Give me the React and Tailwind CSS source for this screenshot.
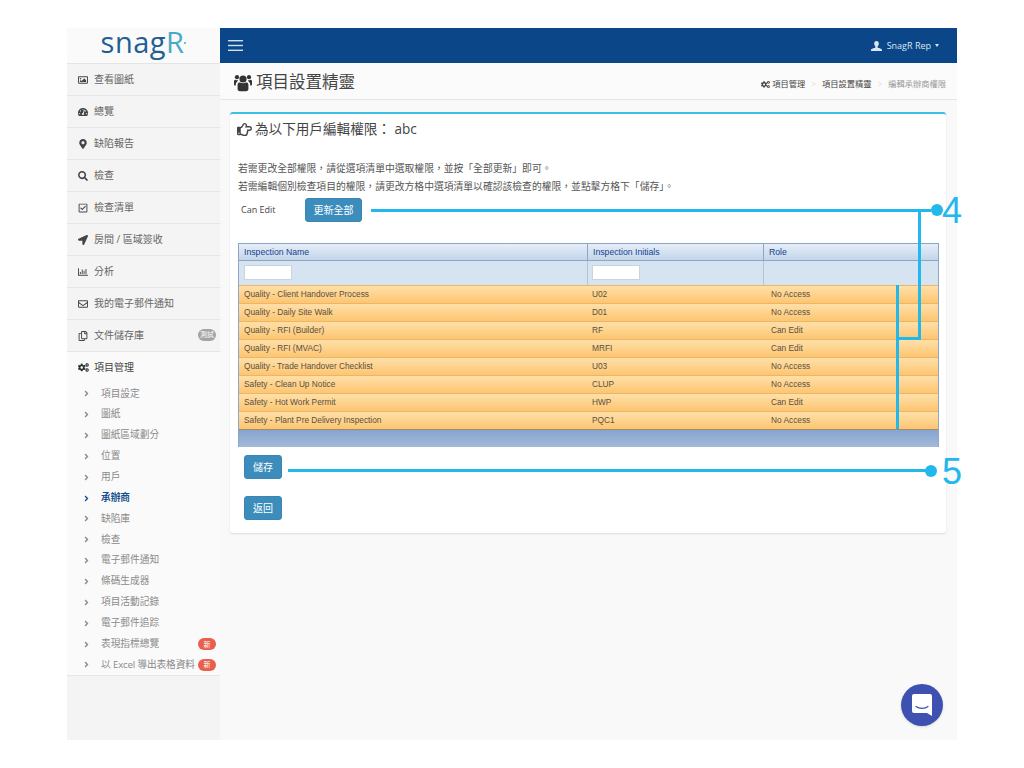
import {
  FaRegImage, FaTachometerAlt, FaMapMarkerAlt, FaSearch, FaRegCheckSquare, FaLocationArrow,
  FaRegChartBar, FaRegEnvelope, FaRegCopy, FaCogs, FaRegHandPointRight, FaAngleRight,
} from "react-icons/fa";

const CJK = "font-['Open_Sans','Noto_Sans_CJK_TC',sans-serif]";

const topMenu = [
  { icon: FaRegImage, label: "查看圖紙" },
  { icon: FaTachometerAlt, label: "總覽" },
  { icon: FaMapMarkerAlt, label: "缺陷報告" },
  { icon: FaSearch, label: "檢查" },
  { icon: FaRegCheckSquare, label: "檢查清單" },
  { icon: FaLocationArrow, label: "房間 / 區域簽收" },
  { icon: FaRegChartBar, label: "分析" },
  { icon: FaRegEnvelope, label: "我的電子郵件通知" },
  { icon: FaRegCopy, label: "文件儲存庫", badge: "測試" },
];

const subMenu = [
  { label: "項目設定" },
  { label: "圖紙" },
  { label: "圖紙區域劃分" },
  { label: "位置" },
  { label: "用戶" },
  { label: "承辦商", active: true },
  { label: "缺陷庫" },
  { label: "檢查" },
  { label: "電子郵件通知" },
  { label: "條碼生成器" },
  { label: "項目活動記錄" },
  { label: "電子郵件追踪" },
  { label: "表現指標總覽", isNew: true },
  { label: "以 Excel 導出表格資料", isNew: true, tight: true },
];

const rows = [
  ["Quality - Client Handover Process", "U02", "No Access"],
  ["Quality - Daily Site Walk", "D01", "No Access"],
  ["Quality - RFI (Builder)", "RF", "Can Edit"],
  ["Quality - RFI (MVAC)", "MRFI", "Can Edit"],
  ["Quality - Trade Handover Checklist", "U03", "No Access"],
  ["Safety - Clean Up Notice", "CLUP", "No Access"],
  ["Safety - Hot Work Permit", "HWP", "Can Edit"],
  ["Safety - Plant Pre Delivery Inspection", "PQC1", "No Access"],
];

function Sidebar() {
  return (
    <div className="w-[153px] shrink-0 bg-[#f4f4f4] flex flex-col">
      <div className="h-[36px] bg-[#fafafa] border-b border-[#e4e4e4] flex items-center justify-center">
        <span className="font-['Open_Sans',sans-serif] font-medium text-[29px] leading-none tracking-[0.5px] text-[#1f5f94] -mt-[8px]">
          snag<span className="text-[#4aa9c4]">R</span>
          <span className="inline-block w-[2px] h-[2px] rounded-full bg-[#4aa9c4] mb-[9px]"></span>
        </span>
      </div>

      {topMenu.map((item) => (
        <div key={item.label} className="h-[32px] flex items-center pl-[11px] pr-[4px] border-b border-[#e6e6e6] text-[#666] text-[10px]">
          <item.icon className="w-[10px] h-[10px] text-[#444] shrink-0" />
          <span className="ml-[6px]">{item.label}</span>
          {item.badge && (
            <span className="ml-auto mb-[2px] w-[18px] h-[12px] flex items-center justify-center bg-[#a3a3a3] text-white text-[7px] leading-none rounded-full">{item.badge}</span>
          )}
        </div>
      ))}

      <div className="h-[32px] pb-[2px] flex items-center pl-[11px] bg-[#fafafa] text-[#444] text-[10px]">
        <FaCogs className="w-[11px] h-[11px] text-[#333] shrink-0" />
        <span className="ml-[5px]">項目管理</span>
      </div>

      <div className="bg-[#fafafa] border-b border-[#e6e6e6] -mt-[0.5px]">
        {subMenu.map((item) => (
          <div key={item.label} className={`h-[20.85px] flex items-center pl-[15px] pr-[4px] text-[9.7px] ${item.active ? "text-[#14508c] font-bold" : "text-[#8a8a8a]"}`}>
            <FaAngleRight className={`w-[9px] h-[9px] shrink-0 ${item.active ? "text-[#14508c]" : "text-[#888]"}`} />
            <span className={`ml-[10px] whitespace-nowrap ${item.tight ? "tracking-[-0.15px]" : ""}`}>{item.label}</span>
            {item.isNew && (
              <span className="ml-auto w-[18px] h-[12px] flex items-center justify-center bg-[#e8604c] text-white text-[7px] leading-none rounded-full">新</span>
            )}
          </div>
        ))}
      </div>
    </div>
  );
}

function Grid() {
  return (
    <div className="mt-[21px] ml-[8px] mr-[7px] border-x border-[#8ea6c6] font-['Liberation_Sans',sans-serif] text-[8.3px]">
      <div className="h-[18px] grid grid-cols-[348px_176px_1fr] border-y border-[#8ea6c6] bg-gradient-to-b from-[#e6eef8] to-[#c3d5ea] text-[#15428b] text-[8.7px]">
        <div className="pl-[5px] pt-[1px] flex items-center">Inspection Name</div>
        <div className="pl-[5px] pt-[1px] flex items-center border-l border-[#8ea6c6]">Inspection Initials</div>
        <div className="pl-[5px] pt-[1px] flex items-center border-l border-[#8ea6c6]">Role</div>
      </div>
      <div className="h-[24px] grid grid-cols-[348px_176px_1fr] bg-[#d6e4f2]">
        <div className="pl-[5px] pb-[2px] flex items-center">
          <input className="w-[48px] h-[15px] bg-white border border-[#c9d4e0]" />
        </div>
        <div className="pl-[4px] pb-[2px] flex items-center border-l border-[#b3c4d8]">
          <input className="w-[48px] h-[15px] bg-white border border-[#c9d4e0]" />
        </div>
        <div className="border-l border-[#b3c4d8]"></div>
      </div>
      {rows.map((r) => (
        <div key={r[0]} className="h-[18px] grid grid-cols-[348px_176px_1fr] items-center border-t border-[#eeb564] bg-gradient-to-b from-[#ffdfa8] to-[#fdc671] text-[#5a5040]">
          <div className="pl-[5px]">{r[0]}</div>
          <div className="pl-[5px]">{r[1]}</div>
          <div className="pl-[8px]">{r[2]}</div>
        </div>
      ))}
      <div className="h-[18px] border-t border-[#a58a5c] bg-gradient-to-b from-[#86a4d0] to-[#a3bad9]"></div>
    </div>
  );
}

function Annotations() {
  return (
    <>
      <div className="absolute left-[371px] top-[209px] w-[560px] h-[3px] bg-[#22b8ec]"></div>
      <div className="absolute left-[931px] top-[204px] w-[12px] h-[12px] rounded-full bg-[#22b8ec]"></div>
      <div className="absolute left-[918px] top-[210px] w-[3px] h-[129px] bg-[#22b8ec]"></div>
      <div className="absolute left-[896px] top-[337px] w-[25px] h-[3px] bg-[#22b8ec]"></div>
      <div className="absolute left-[896px] top-[285px] w-[3px] h-[144px] bg-[#22b8ec]"></div>
      <div className="absolute left-[942px] top-[189px] font-['Liberation_Sans',sans-serif] text-[36px] leading-[44px] text-[#22b8ec]">4</div>

      <div className="absolute left-[288px] top-[469px] w-[640px] h-[3px] bg-[#22b8ec]"></div>
      <div className="absolute left-[925px] top-[465px] w-[12px] h-[12px] rounded-full bg-[#22b8ec]"></div>
      <div className="absolute left-[942px] top-[450px] font-['Liberation_Sans',sans-serif] text-[36px] leading-[44px] text-[#22b8ec]">5</div>

      <div className="absolute left-[901px] top-[684px] w-[42px] h-[42px] rounded-full bg-[#3f51b0] flex items-center justify-center shadow">
        <svg width="20" height="22" viewBox="0 0 20 22">
          <path d="M2 0h16a2 2 0 0 1 2 2v20l-5-3H2a2 2 0 0 1-2-2V2a2 2 0 0 1 2-2z" fill="#fff" />
          <path d="M4 12.5c3 2.4 9 2.4 12 0" fill="none" stroke="#3f51b0" strokeWidth="1.2" strokeLinecap="round" />
        </svg>
      </div>
    </>
  );
}

function UsersIcon() {
  return (
    <svg width="18" height="18" viewBox="0 0 18 18" fill="#333">
      <circle cx="9" cy="5" r="3.6" />
      <circle cx="3" cy="3.2" r="2.1" />
      <circle cx="15" cy="3.2" r="2.1" />
      <path d="M3.6 10.5c0-1.6 1.4-2.2 2.4-2 1.8 1 4.2 1 6 0 1-.2 2.4.4 2.4 2V15c0 1.4-1 2.2-2.2 2.2H5.8C4.6 17.2 3.6 16.4 3.6 15z" />
      <path d="M0 7.3C0 6.3.8 5.8 1.6 5.8c.8.5 1.7.6 2.4.5-.2 1-.9 1.4-1.6 2.2-.5.6-.6 1.4-.6 2.3V11.5H1c-.6 0-1-.5-1-1z" />
      <path d="M18 7.3c0-1-.8-1.5-1.6-1.5-.8.5-1.7.6-2.4.5.2 1 .9 1.4 1.6 2.2.5.6.6 1.4.6 2.3v.7h.8c.6 0 1-.5 1-1z" />
    </svg>
  );
}

function UserIcon() {
  return (
    <svg width="11" height="10" viewBox="0 0 11 10" fill="#dbe6f2" className="mr-[5px]">
      <path d="M5.5 0C7 0 7.8 1.1 7.8 2.6c0 1.1-.5 2.3-1.2 2.9v.9c.8.5 4.4 1 4.4 2.6V10H0V9c0-1.6 3.6-2.1 4.4-2.6v-.9C3.7 4.9 3.2 3.7 3.2 2.6 3.2 1.1 4 0 5.5 0z" />
    </svg>
  );
}

export default function App() {
  return (
    <div className={`relative w-[1024px] h-[768px] bg-white overflow-hidden ${CJK}`}>
      <div className="pt-[28px] pl-[67px]">
        <div className="w-[890px] h-[712px] flex bg-[#f9f9f9]">
          <Sidebar />

          <div className="flex-1 flex flex-col">
            <div className="h-[35px] bg-[#0b4688] flex items-center justify-between pl-[8px] pr-[18px] text-white">
              <svg width="15" height="11" viewBox="0 0 15 11" fill="#cfe0f0">
                <rect width="15" height="1.4" y="0" />
                <rect width="15" height="1.4" y="4.8" />
                <rect width="15" height="1.4" y="9.6" />
              </svg>
              <div className="flex items-center text-[9px] text-[#dbe6f2]">
                <UserIcon />
                <span>SnagR Rep</span>
                <span className="ml-[4px] border-x-[2.5px] border-x-transparent border-t-[3px] border-t-[#dbe6f2]"></span>
              </div>
            </div>

            <div className="h-[37px] bg-[#fbfbfb] border-b border-[#e6e6e6] flex items-center justify-between pl-[14px] pr-[11px]">
              <div className="flex items-center pt-[3px]">
                <UsersIcon />
                <span className="ml-[4px] text-[16.5px] text-[#444]">項目設置精靈</span>
              </div>
              <div className="flex items-center pt-[6px] text-[8.25px] text-[#444]">
                <FaCogs className="w-[9px] h-[9px] mr-[2px]" />
                <span>項目管理</span>
                <span className="mx-[6px] text-[#ddd]">&gt;</span>
                <span>項目設置精靈</span>
                <span className="mx-[6px] text-[#ddd]">&gt;</span>
                <span className="text-[#999]">編輯承辦商權限</span>
              </div>
            </div>

            <div className="ml-[10px] mr-[11px] mt-[12px] h-[421px] bg-white border-t-2 border-[#3cc0e4] rounded-[3px] shadow-[0_1px_2px_rgba(0,0,0,0.12)]">
              <div className="h-[30px] pl-[7px] flex items-center text-[#444] text-[13.6px]">
                <FaRegHandPointRight className="w-[15px] h-[15px] mr-[3px]" />
                <span>為以下用戶編輯權限： abc</span>
              </div>

              <div className="mt-[16px] pl-[8px] text-[9.8px] leading-[18px] text-[#555]">
                <p>若需更改全部權限，請從選項清單中選取權限，並按「全部更新」即可。</p>
                <p>若需編輯個別檢查項目的權限，請更改方格中選項清單以確認該檢查的權限，並點擊方格下「儲存」。</p>
              </div>

              <div className="mt-[2px] pl-[11px] flex items-center">
                <span className="w-[64px] text-[9px] text-[#444]">Can Edit</span>
                <button className="w-[57px] h-[24px] bg-[#3c8dbc] border border-[#3a87b5] rounded-[3px] text-white text-[10px]">更新全部</button>
              </div>

              <Grid />

              <div className="mt-[8px] pl-[14px] flex flex-col gap-[17px] items-start">
                <button className="w-[38px] h-[24px] bg-[#3c8dbc] border border-[#3a87b5] rounded-[3px] text-white text-[10px]">儲存</button>
                <button className="w-[38px] h-[24px] bg-[#3c8dbc] border border-[#3a87b5] rounded-[3px] text-white text-[10px]">返回</button>
              </div>
            </div>
          </div>
        </div>
      </div>

      <Annotations />
    </div>
  );
}
